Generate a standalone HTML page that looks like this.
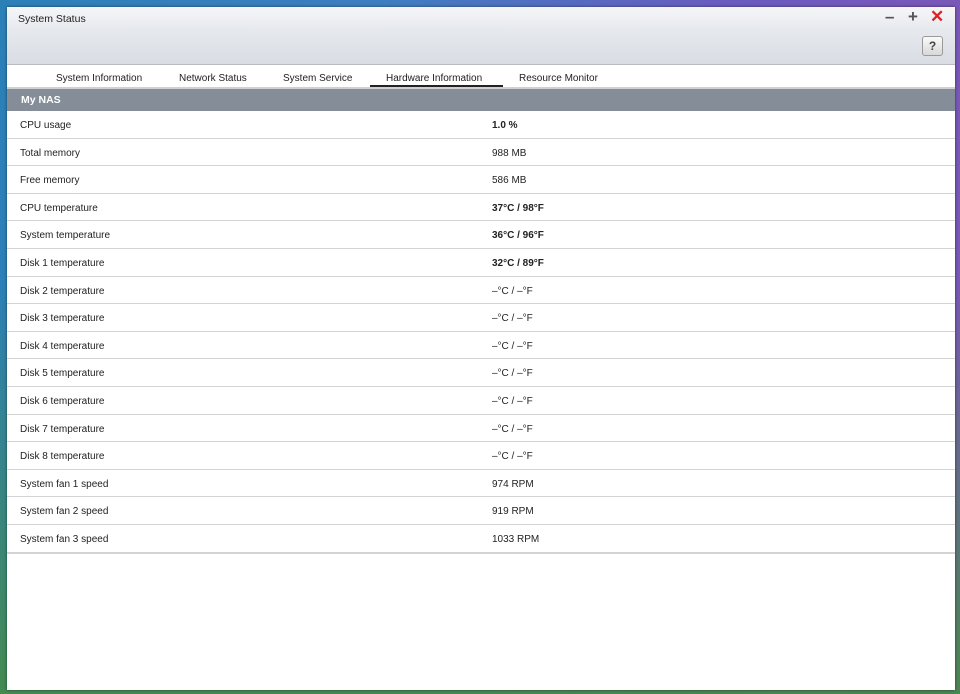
<!DOCTYPE html>
<html><head><style>
body{margin:0;width:960px;height:694px;overflow:hidden;font-family:"Liberation Sans",sans-serif;
background:linear-gradient(90deg,#2c80b8 0%,#3f7ec0 40%,#6a5cc0 75%,#7a58b8 100%);position:relative}
.bg2{position:absolute;inset:0;background:linear-gradient(180deg,rgba(0,0,0,0) 40%,rgba(70,140,70,.9) 100%)}
.win{position:absolute;left:7px;top:7px;width:948px;height:683px;background:#fff;box-shadow:0 0 3px rgba(0,0,0,.5)}
.title{height:57px;background:linear-gradient(#f6f6f8,#e6e9ee 40%,#d9dde3);border-bottom:1px solid #b8bcc2;position:relative}
.title span{position:absolute;left:11px;top:6px;font-size:10.5px;color:#222}
.ctl{position:absolute;top:2px;font-size:17px;font-weight:bold;color:#555}
.help{position:absolute;right:12px;top:29px;width:19px;height:18px;border:1px solid #999;border-radius:3px;background:linear-gradient(#fafafa,#d8d8d8);font-size:12px;text-align:center;line-height:18px;color:#444;font-weight:bold}
.tabs{height:22px;border-bottom:2px solid #d0d0d0;position:relative;font-size:10px;color:#222}
.tabs span{position:absolute;top:8px}
.hdr{height:22px;background:#858d98;color:#fff;font-weight:bold;font-size:10.5px;line-height:22px;padding-left:14px}
.row{height:26.6px;border-bottom:1px solid #d4d4d4;font-size:10px;color:#222;position:relative}
.row span{position:absolute;top:9px}
.row .l{left:13px}.row .v{left:485px}
.b{font-weight:bold}
</style></head><body><div class="bg2"></div>
<div class="win">
<div class="title"><span>System Status</span>
<div class="ctl" style="left:878px;top:0">–</div><div class="ctl" style="left:901px;top:0">+</div><div class="ctl" style="left:923px;top:0;color:#d22">✕</div>
<div class="help">?</div></div>
<div class="tabs"><span style="left:49px">System Information</span><span style="left:172px">Network Status</span><span style="left:276px">System Service</span><span style="left:379px">Hardware Information</span><span style="left:512px">Resource Monitor</span>
<div style="position:absolute;left:363px;top:20px;width:133px;height:2px;background:#222"></div></div>
<div class="hdr">My NAS</div>
<div class="row"><span class="l">CPU usage</span><span class="v b">1.0 %</span></div>
<div class="row"><span class="l">Total memory</span><span class="v">988 MB</span></div>
<div class="row"><span class="l">Free memory</span><span class="v">586 MB</span></div>
<div class="row"><span class="l">CPU temperature</span><span class="v b">37°C / 98°F</span></div>
<div class="row"><span class="l">System temperature</span><span class="v b">36°C / 96°F</span></div>
<div class="row"><span class="l">Disk 1 temperature</span><span class="v b">32°C / 89°F</span></div>
<div class="row"><span class="l">Disk 2 temperature</span><span class="v">–°C / –°F</span></div>
<div class="row"><span class="l">Disk 3 temperature</span><span class="v">–°C / –°F</span></div>
<div class="row"><span class="l">Disk 4 temperature</span><span class="v">–°C / –°F</span></div>
<div class="row"><span class="l">Disk 5 temperature</span><span class="v">–°C / –°F</span></div>
<div class="row"><span class="l">Disk 6 temperature</span><span class="v">–°C / –°F</span></div>
<div class="row"><span class="l">Disk 7 temperature</span><span class="v">–°C / –°F</span></div>
<div class="row"><span class="l">Disk 8 temperature</span><span class="v">–°C / –°F</span></div>
<div class="row"><span class="l">System fan 1 speed</span><span class="v">974 RPM</span></div>
<div class="row"><span class="l">System fan 2 speed</span><span class="v">919 RPM</span></div>
<div class="row" style="border-bottom:2px solid #d4d4d4"><span class="l">System fan 3 speed</span><span class="v">1033 RPM</span></div>
</div>
</body></html>
